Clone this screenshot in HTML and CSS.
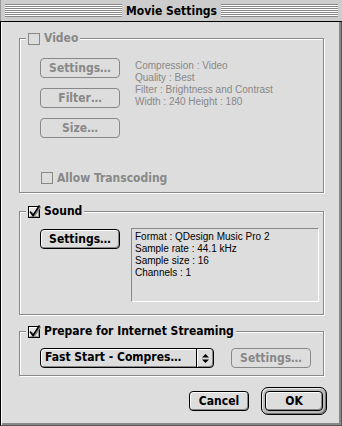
FILE: index.html
```html
<!DOCTYPE html>
<html>
<head>
<meta charset="utf-8">
<title>Movie Settings</title>
<link rel="stylesheet" href="styles.css">
</head>
<body>
<div class="window">
  <div class="titlebar">
    <div class="stripes"></div>
    <div class="title">Movie Settings</div>
    <div class="stripes"></div>
  </div>
  <div class="content">
    <fieldset class="group">
      <legend class="legend"><span class="cb off"></span><span class="lbl dim">Video</span></legend>
      <div class="gbody video-body">
        <div class="video-row">
          <div class="btncol">
            <button class="btn dis">Settings…</button>
            <button class="btn dis">Filter…</button>
            <button class="btn dis">Size…</button>
          </div>
          <div class="info dim video-info">
            <div>Compression : Video</div>
            <div>Quality : Best</div>
            <div>Filter : Brightness and Contrast</div>
            <div>Width : 240 Height : 180</div>
          </div>
        </div>
        <div class="check-row"><span class="cb off"></span><span class="lbl dim">Allow Transcoding</span></div>
      </div>
    </fieldset>

    <fieldset class="group sound">
      <legend class="legend">
        <svg class="cbx" width="12" height="12" viewBox="0 0 12 12" overflow="visible">
          <rect x="0.5" y="0.5" width="11" height="11" fill="#e4e4e4" stroke="#000"/>
          <path d="M1.5 10.5V1.5H10.5" stroke="#fff" fill="none"/>
          <path d="M10.5 1.5V10.5H1.5" stroke="#999" fill="none"/>
          <path d="M3 6.5L5.5 10L11.5 0.5" stroke="#888" stroke-width="1.5" fill="none" transform="translate(1 0)"/>
          <path d="M2 5.5L5 9.5L11.5 -0.5" stroke="#000" stroke-width="1.6" fill="none"/>
        </svg><span class="lbl">Sound</span></legend>
      <div class="gbody sound-body">
        <button class="btn sound-btn">Settings…</button>
        <div class="infobox info">
          <div>Format : QDesign Music Pro 2</div>
          <div>Sample rate : 44.1 kHz</div>
          <div>Sample size : 16</div>
          <div>Channels : 1</div>
        </div>
      </div>
    </fieldset>

    <fieldset class="group stream">
      <legend class="legend">
        <svg class="cbx" width="12" height="12" viewBox="0 0 12 12" overflow="visible">
          <rect x="0.5" y="0.5" width="11" height="11" fill="#e4e4e4" stroke="#000"/>
          <path d="M1.5 10.5V1.5H10.5" stroke="#fff" fill="none"/>
          <path d="M10.5 1.5V10.5H1.5" stroke="#999" fill="none"/>
          <path d="M3 6.5L5.5 10L11.5 0.5" stroke="#888" stroke-width="1.5" fill="none" transform="translate(1 0)"/>
          <path d="M2 5.5L5 9.5L11.5 -0.5" stroke="#000" stroke-width="1.6" fill="none"/>
        </svg><span class="lbl">Prepare for Internet Streaming</span></legend>
      <div class="gbody stream-body">
        <div class="popup">
          <span class="popup-text">Fast Start - Compres…</span>
          <span class="popup-arrow">
            <svg width="7" height="11" viewBox="0 0 7 11"><path d="M0 4.5L3.5 1L7 4.5Z M0 6.5H7L3.5 10Z" fill="#000"/></svg>
          </span>
        </div>
        <button class="btn dis">Settings…</button>
      </div>
    </fieldset>

    <div class="actions">
      <button class="btn cancel">Cancel</button>
      <div class="default-ring"><button class="btn ok">OK</button></div>
    </div>
  </div>
</div>
</body>
</html>
```

FILE: styles.css
```css
html, body {
  margin: 0;
  padding: 0;
  background: #dddddd;
}

body {
  font-family: "DejaVu Sans Condensed", "DejaVu Sans", sans-serif;
  font-stretch: condensed;
  font-size: 12px;
  color: #000;
}

.window {
  width: 342px;
  height: 426px;
  display: flex;
  flex-direction: column;
  background: #dddddd;
}

.titlebar {
  height: 21px;
  flex: none;
  border-bottom: 1px solid #000;
  background: #cccccc;
  display: flex;
  align-items: center;
  gap: 3px;
  padding: 0 4px 0 5px;
  box-shadow: inset 1px 0 0 #999;
}

.stripes {
  flex: 1;
  height: 13px;
  background: repeating-linear-gradient(to bottom, #888 0 1px, #fff 1px 2px);
}

.title {
  font-weight: bold;
  font-size: 12px;
  line-height: 14px;
  padding: 0 1px;
}

.content {
  flex: 1;
  border-left: 1px solid #000;
  border-right: 1px solid #555;
  border-bottom: 1px solid #555;
  box-shadow: inset 1px 0 0 #fff, inset -2px -2px 0 #888;
  padding: 10px 14px 0 18px;
  display: flex;
  flex-direction: column;
}

.group {
  margin: 0 3px 0 0;
  padding: 0;
  min-width: 0;
  border: 1px solid #888;
  box-shadow: 1px 1px 0 #fff, inset 1px 1px 0 #fff;
}

.group.sound {
  margin-top: 12px;
}

.group.stream {
  margin-top: 10px;
}

.legend {
  display: flex;
  align-items: center;
  gap: 4px;
  height: 13px;
  padding: 0 2px;
  margin-left: 6px;
  background: #dddddd;
}

.lbl {
  font-weight: bold;
  font-size: 12px;
  line-height: 13px;
  white-space: nowrap;
}

.dim {
  color: #888;
}

.cb {
  display: block;
  width: 12px;
  height: 12px;
  box-sizing: border-box;
  border: 1px solid #000;
  flex: none;
}

.cb.off {
  border-color: #888;
  background: #dddddd;
}

.cbx {
  display: block;
  flex: none;
}

.gbody {
  padding-left: 20px;
}

.video-body {
  padding-top: 13px;
  padding-bottom: 8px;
}

.video-row {
  display: grid;
  grid-template-columns: 80px 1fr;
  column-gap: 15px;
}

.btncol {
  display: flex;
  flex-direction: column;
  gap: 10px;
}

.info {
  font-family: "Liberation Sans", Arial, sans-serif;
  font-stretch: normal;
  font-size: 10px;
  line-height: 12px;
  white-space: nowrap;
}

.video-info {
  padding-top: 2px;
}

.check-row {
  display: flex;
  align-items: center;
  gap: 4px;
  margin-top: 34px;
  margin-left: 1px;
  height: 12px;
}

.btn {
  display: flex;
  align-items: center;
  justify-content: center;
  box-sizing: border-box;
  width: 80px;
  height: 20px;
  margin: 0;
  padding: 0 0 1px 0;
  border: 1px solid #000;
  border-radius: 4px;
  background: #dddddd;
  box-shadow: inset 1px 1px 0 #fff, inset -1px -1px 0 #888;
  font-family: inherit;
  font-stretch: condensed;
  font-weight: bold;
  font-size: 12px;
  line-height: 14px;
  color: #000;
}

.btn.dis {
  border-color: #888;
  box-shadow: none;
  color: #888;
}

.sound-body {
  display: flex;
  align-items: flex-start;
  gap: 11px;
  padding-top: 10px;
  padding-bottom: 12px;
}

.sound-btn {
  margin-top: 1px;
  flex: none;
}

.infobox {
  width: 188px;
  height: 74px;
  box-sizing: border-box;
  border-top: 1px solid #888;
  border-left: 1px solid #888;
  border-right: 1px solid #fff;
  border-bottom: 1px solid #fff;
  padding: 2px 0 0 3px;
}

.stream-body {
  display: flex;
  align-items: center;
  gap: 17px;
  padding-top: 10px;
  padding-bottom: 7px;
}

.popup {
  display: flex;
  box-sizing: border-box;
  width: 174px;
  height: 20px;
  border: 1px solid #000;
  border-radius: 4px;
  background: #dddddd;
  box-shadow: inset 1px 1px 0 #fff, inset -1px -1px 0 #888;
  flex: none;
}

.popup-text {
  flex: 1;
  padding-left: 4px;
  font-weight: bold;
  font-size: 12px;
  line-height: 17px;
  white-space: nowrap;
  overflow: hidden;
}

.popup-arrow {
  width: 16px;
  border-left: 1px solid #000;
  box-shadow: inset 1px 0 0 #fff;
  display: flex;
  align-items: center;
  justify-content: center;
}

.popup-arrow svg {
  display: block;
}

.actions {
  display: flex;
  justify-content: flex-end;
  align-items: center;
  gap: 12px;
  margin-top: 11px;
}

.btn.cancel {
  width: 60px;
}

.default-ring {
  border: 1px solid #000;
  border-radius: 7px;
  padding: 3px;
  background: #bbbbbb;
  box-shadow: inset 1px 1px 0 #eee, inset -1px -1px 0 #777;
}

.btn.ok {
  width: 58px;
}
```
